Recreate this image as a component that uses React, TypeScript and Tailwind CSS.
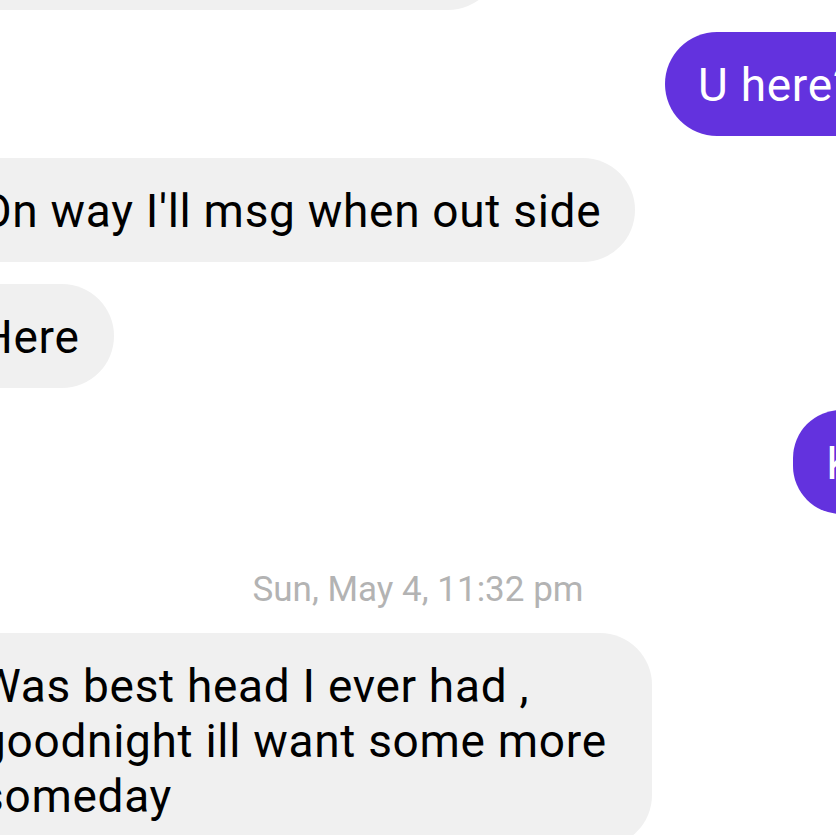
export default function App() {
  return (
    <div
      className="w-[836px] h-[835px] overflow-hidden bg-white flex flex-col items-start gap-[22px]"
      style={{ fontFamily: 'Roboto, "Noto Sans", sans-serif' }}
    >
      {/* tail of the previous message, mostly scrolled out of view */}
      <div className="shrink-0 h-[104px] w-[560px] -mt-[94px] -ml-[60px] rounded-[52px] bg-[#f0f0f0]" />

      <Bubble mine className="ml-[665px] w-max">
        U here?
      </Bubble>
      <Bubble className="w-max">On way I'll msg when out side</Bubble>
      <Bubble className="w-max">Here</Bubble>
      <Bubble mine className="ml-[793px] w-max">
        K
      </Bubble>

      <p className="self-center mt-[34px] mb-px text-[35px] leading-[40px] text-[#b3b3b3] whitespace-nowrap">
        Sun, May 4, 11:32 pm
      </p>

      <Bubble className="w-[706px] rounded-[50px]">
        Was best head I ever had ,<br />
        goodnight ill want some more
        <br />
        someday
      </Bubble>
    </div>
  )
}

function Bubble({
  children,
  mine,
  className = '',
}: {
  children: React.ReactNode
  mine?: boolean
  className?: string
}) {
  return (
    <div
      className={`shrink-0 whitespace-nowrap rounded-[52px] pt-[26px] pb-[23px] text-[46px] leading-[55px] tracking-[0.7px] ${
        mine
          ? 'bg-[#6332de] text-white px-[33px]'
          : 'bg-[#f0f0f0] text-black -ml-[54px] pl-[34px] pr-[34px]'
      } ${className}`}
    >
      {children}
    </div>
  )
}
